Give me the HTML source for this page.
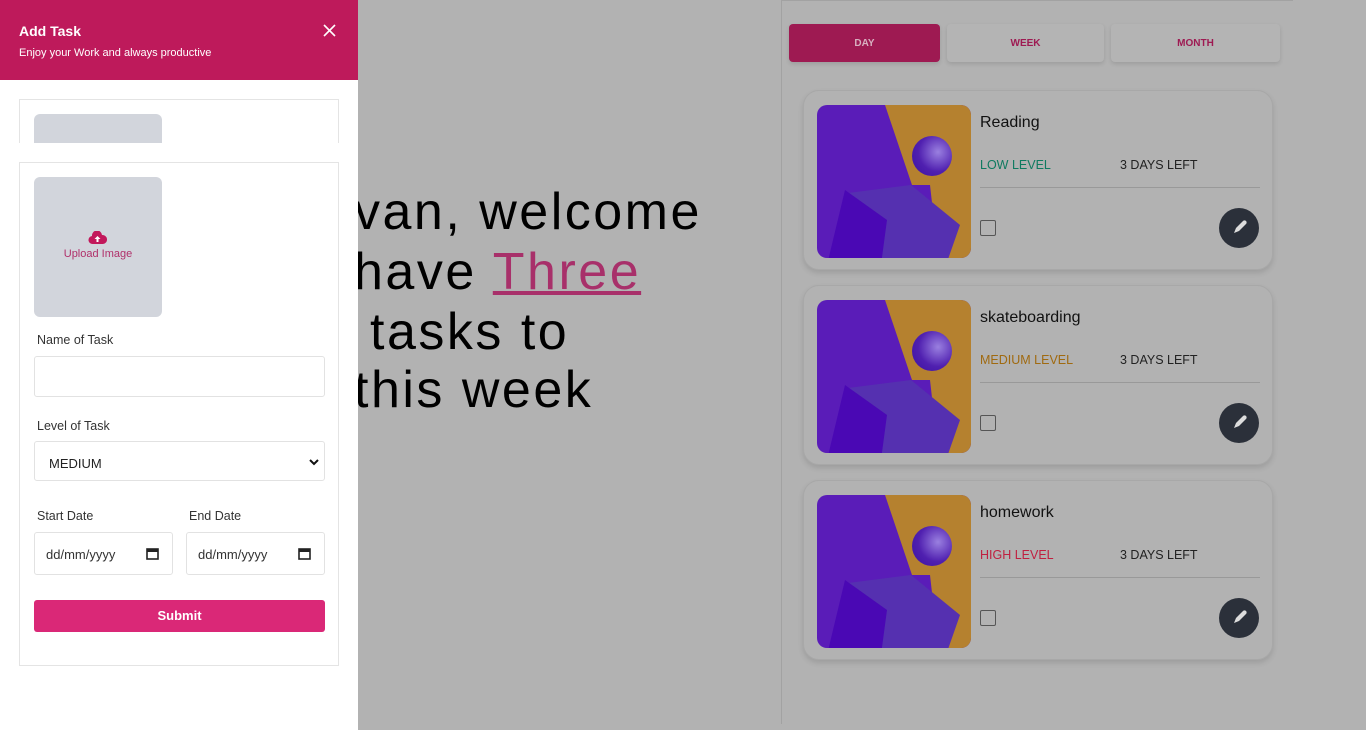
<!DOCTYPE html>
<html><head><meta charset="utf-8"><style>
*{box-sizing:border-box;margin:0;padding:0}
body{width:1366px;height:730px;overflow:hidden;background:#b2b2b2;font-family:"Liberation Sans",sans-serif;position:relative}
.big{position:absolute;left:354px;font-size:52px;letter-spacing:2.5px;color:#000;white-space:nowrap;line-height:1}
.vline{position:absolute;left:781px;top:0;width:1px;height:724px;background:#a2a2a2}
.hline{position:absolute;left:781px;top:0;width:512px;height:1px;background:#a2a2a2}
.tab{position:absolute;top:24px;height:38px;border-radius:4px;font-size:10px;font-weight:bold;display:flex;align-items:center;justify-content:center;color:#9e1a52;background:#b4b4b4;box-shadow:0 2px 4px rgba(0,0,0,.12)}
.card{position:absolute;left:803px;width:470px;height:180px;border-radius:16px;border:1px solid #a8a8a8;background:#b2b2b2;box-shadow:0 3px 6px rgba(0,0,0,.12)}
.img{position:absolute;left:13px;top:14px;width:154px;height:153px;border-radius:10px;overflow:hidden;background:#5a1cb8}
.img .or{position:absolute;left:68px;top:0;width:90px;height:160px;background:#b5812f;clip-path:polygon(0 0,100% 0,100% 100%,60% 100%,50% 50%,30% 50%)}
.img .cube{position:absolute;left:10px;top:80px;width:140px;height:80px;background:#5530b0;clip-path:polygon(15% 10%,60% 0,95% 50%,85% 100%,0 100%)}
.img .cube2{position:absolute;left:10px;top:85px;width:60px;height:75px;background:#4a08b4;clip-path:polygon(30% 0,100% 40%,90% 100%,0 100%)}
.img .sph{position:absolute;left:95px;top:31px;width:40px;height:40px;border-radius:50%;background:radial-gradient(circle at 65% 40%,#9a80e0,#5020b0 55%,#3a10a0)}
.title{position:absolute;left:176px;top:23px;font-size:16px;color:#111}
.lvl{position:absolute;left:176px;top:67px;font-size:12.5px}
.days{position:absolute;left:316px;top:67px;font-size:12.5px;color:#222}
.sep{position:absolute;left:176px;top:96px;width:280px;height:1px;background:#999}
.cb{position:absolute;left:176px;top:129px;width:16px;height:16px;border:1px solid #555;border-radius:2px}
.edit{position:absolute;left:415px;top:117px;width:40px;height:40px;border-radius:50%;background:#2b303a}
.panel{position:absolute;left:0;top:0;width:358px;height:730px;background:#fff}
.head{height:80px;background:#be1a5b;color:#fff;padding:23px 19px}
.head h1{font-size:14px;font-weight:bold}
.head p{font-size:11px;margin-top:8px}
.box{position:absolute;left:19px;width:320px;border:1px solid #e4e4e4}
.up{position:absolute;left:34px;width:128px;background:#d2d5dc;border-radius:6px}
label{position:absolute;font-size:12.5px;color:#333}
.in{position:absolute;border:1px solid #e2e2e2;border-radius:3px;background:#fff;font-size:13px;color:#222}
</style></head><body>
<div class="hline"></div><div class="vline"></div>
<div class="big" style="top:186px">van, welcome</div>
<div class="big" style="top:246px">have <span style="color:#a8306a;text-decoration:underline;text-decoration-thickness:4px">Three</span></div>
<div class="big" style="top:306px;left:370px">tasks to</div>
<div class="big" style="top:364px">this week</div>

<div class="tab" style="left:789px;width:151px;background:#9e1a52;color:#d8b0c0">DAY</div>
<div class="tab" style="left:947px;width:157px">WEEK</div>
<div class="tab" style="left:1111px;width:169px">MONTH</div>

<div class="card" style="top:90px"><div class="img"><div class="or"></div><div class="cube"></div><div class="cube2"></div><div class="sph"></div></div><div class="title">Reading</div><div class="lvl" style="color:#0f7a60">LOW LEVEL</div><div class="days">3 DAYS LEFT</div><div class="sep"></div><div class="cb"></div><div class="edit"><svg width="40" height="40"><path d="M15 25l2-5 7-7a2 2 0 0 1 3 3l-7 7z" fill="#ddd"/></svg></div></div>
<div class="card" style="top:285px"><div class="img"><div class="or"></div><div class="cube"></div><div class="cube2"></div><div class="sph"></div></div><div class="title">skateboarding</div><div class="lvl" style="color:#a06a10">MEDIUM LEVEL</div><div class="days">3 DAYS LEFT</div><div class="sep"></div><div class="cb"></div><div class="edit"><svg width="40" height="40"><path d="M15 25l2-5 7-7a2 2 0 0 1 3 3l-7 7z" fill="#ddd"/></svg></div></div>
<div class="card" style="top:480px"><div class="img"><div class="or"></div><div class="cube"></div><div class="cube2"></div><div class="sph"></div></div><div class="title">homework</div><div class="lvl" style="color:#c02040">HIGH LEVEL</div><div class="days">3 DAYS LEFT</div><div class="sep"></div><div class="cb"></div><div class="edit"><svg width="40" height="40"><path d="M15 25l2-5 7-7a2 2 0 0 1 3 3l-7 7z" fill="#ddd"/></svg></div></div>

<div class="panel">
<div class="head"><h1>Add Task</h1><p>Enjoy your Work and always productive</p>
<svg style="position:absolute;left:323px;top:24px" width="13" height="13"><path d="M1 1L12 12M12 1L1 12" stroke="#fff" stroke-width="1.6"/></svg></div>
<div class="box" style="top:99px;height:44px;border-bottom:none"></div>
<div class="up" style="top:114px;height:29px;border-radius:6px 6px 0 0"></div>
<div class="box" style="top:162px;height:504px"></div>
<div class="up" style="top:177px;height:140px"></div>
<svg style="position:absolute;left:88px;top:231px" width="19" height="14" viewBox="0 0 19 14"><path d="M5 13a4 4 0 0 1-1-8 5 5 0 0 1 10-1 4 4 0 0 1 1 9z" fill="#c2185b"/><path d="M9.5 5l-3 3h2v3h2V8h2z" fill="#fff"/></svg>
<div style="position:absolute;left:34px;top:248px;width:128px;text-align:center;font-size:11px;color:#b0306a">Upload Image</div>
<label style="left:37px;top:333px">Name of Task</label>
<div class="in" style="left:34px;top:356px;width:291px;height:41px"></div>
<label style="left:37px;top:419px">Level of Task</label>
<div class="in" style="left:34px;top:441px;width:291px;height:40px;padding:14px 14px"><span>MEDIUM</span>
<svg style="position:absolute;right:5px;top:16px" width="10" height="8"><path d="M1 2l4 4 4-4" stroke="#111" stroke-width="2" fill="none"/></svg></div>
<label style="left:37px;top:509px">Start Date</label>
<label style="left:189px;top:509px">End Date</label>
<div class="in" style="left:34px;top:532px;width:139px;height:43px;padding:14px 11px;color:#333">dd/mm/yyyy<svg style="position:absolute;right:13px;top:14px" width="13" height="13"><rect x="1" y="2" width="11" height="10" fill="none" stroke="#222" stroke-width="1.6"/><rect x="1" y="2" width="11" height="3" fill="#222"/></svg></div>
<div class="in" style="left:186px;top:532px;width:139px;height:43px;padding:14px 11px;color:#333">dd/mm/yyyy<svg style="position:absolute;right:13px;top:14px" width="13" height="13"><rect x="1" y="2" width="11" height="10" fill="none" stroke="#222" stroke-width="1.6"/><rect x="1" y="2" width="11" height="3" fill="#222"/></svg></div>
<div style="position:absolute;left:34px;top:600px;width:291px;height:32px;background:#da2877;border-radius:3px;color:#fff;font-weight:bold;font-size:13px;text-align:center;line-height:32px">Submit</div>
</div>
</body></html>
